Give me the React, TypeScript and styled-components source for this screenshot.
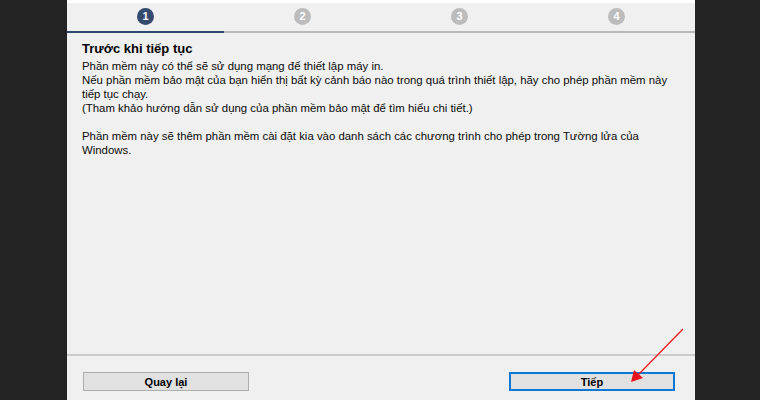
import styled, { createGlobalStyle } from 'styled-components'

const GlobalStyle = createGlobalStyle`
  html, body {
    margin: 0;
    padding: 0;
    background: #232323;
  }
  body {
    font-family: "Liberation Sans", Arial, sans-serif;
  }
`

const Screen = styled.div`
  position: relative;
  display: flex;
  width: 760px;
  height: 400px;
  overflow: hidden;
  background: #232323;
`

const SideBar = styled.div<{ $w: number }>`
  flex: 0 0 ${({ $w }) => $w}px;
  background: #232323;
`

const Dialog = styled.div`
  flex: 0 0 628px;
  display: flex;
  flex-direction: column;
  background: #f0f0f0;
  border-top: 3px solid #ffffff;
`

const Steps = styled.div`
  display: grid;
  grid-template-columns: repeat(4, 1fr);
`

const Step = styled.div<{ $active: boolean }>`
  display: flex;
  justify-content: center;
  padding: 5px 0 6px;
  border-bottom: 2px solid ${({ $active }) => ($active ? '#2e4670' : '#b8b8b8')};
`

const StepDot = styled.div<{ $active: boolean }>`
  width: 17px;
  height: 17px;
  border-radius: 50%;
  background: ${({ $active }) => ($active ? '#364a70' : '#bcbcbc')};
  color: #ffffff;
  font-size: 11px;
  font-weight: 700;
  line-height: 17px;
  text-align: center;
`

const Content = styled.div`
  flex: 1;
  padding: 7px 15px 0;
  color: #000000;
`

const Title = styled.h1`
  margin: 0 0 1px;
  font-size: 13px;
  font-weight: 700;
  line-height: 18px;
`

const Para = styled.p`
  margin: 0 0 14px;
  font-size: 11.4px;
  line-height: 14px;
  color: #0a0a0a;
`

const Footer = styled.div`
  display: flex;
  justify-content: space-between;
  padding: 16px 20px 9px 16px;
  border-top: 2px solid #cccccc;
`

const Button = styled.button<{ $primary?: boolean }>`
  width: 166px;
  height: 19px;
  padding: 0;
  box-sizing: border-box;
  background: #e1e1e1;
  border: ${({ $primary }) => ($primary ? '2px solid #0a78d4' : '1px solid #adadad')};
  font-family: "Liberation Sans", Arial, sans-serif;
  font-size: 11px;
  font-weight: 700;
  color: #000000;
`

const Arrow = styled.svg`
  position: absolute;
  left: 0;
  top: 0;
  pointer-events: none;
`

const steps = [1, 2, 3, 4]

export default function App() {
  return (
    <>
      <GlobalStyle />
      <Screen>
        <SideBar $w={67} />
        <Dialog>
          <Steps>
            {steps.map((n) => (
              <Step key={n} $active={n === 1}>
                <StepDot $active={n === 1}>{n}</StepDot>
              </Step>
            ))}
          </Steps>
          <Content>
            <Title>Trước khi tiếp tục</Title>
            <Para>
              Phần mềm này có thể sẽ sử dụng mạng để thiết lập máy in.
              <br />
              Nếu phần mềm bảo mật của bạn hiển thị bất kỳ cảnh báo nào trong quá trình thiết lập, hãy cho phép phần mềm này tiếp tục chạy.
              <br />
              (Tham khảo hướng dẫn sử dụng của phần mềm bảo mật để tìm hiểu chi tiết.)
            </Para>
            <Para>
              Phần mềm này sẽ thêm phần mềm cài đặt kia vào danh sách các chương trình cho phép trong Tường lửa của Windows.
            </Para>
          </Content>
          <Footer>
            <Button>Quay lại</Button>
            <Button $primary>Tiếp</Button>
          </Footer>
        </Dialog>
        <SideBar $w={65} />
        <Arrow width="760" height="400" viewBox="0 0 760 400">
          <line x1="683" y1="329" x2="638" y2="375" stroke="#e8141c" strokeWidth="1.2" />
          <polygon points="631,382 634,370 643,378" fill="#e8141c" />
        </Arrow>
      </Screen>
    </>
  )
}
